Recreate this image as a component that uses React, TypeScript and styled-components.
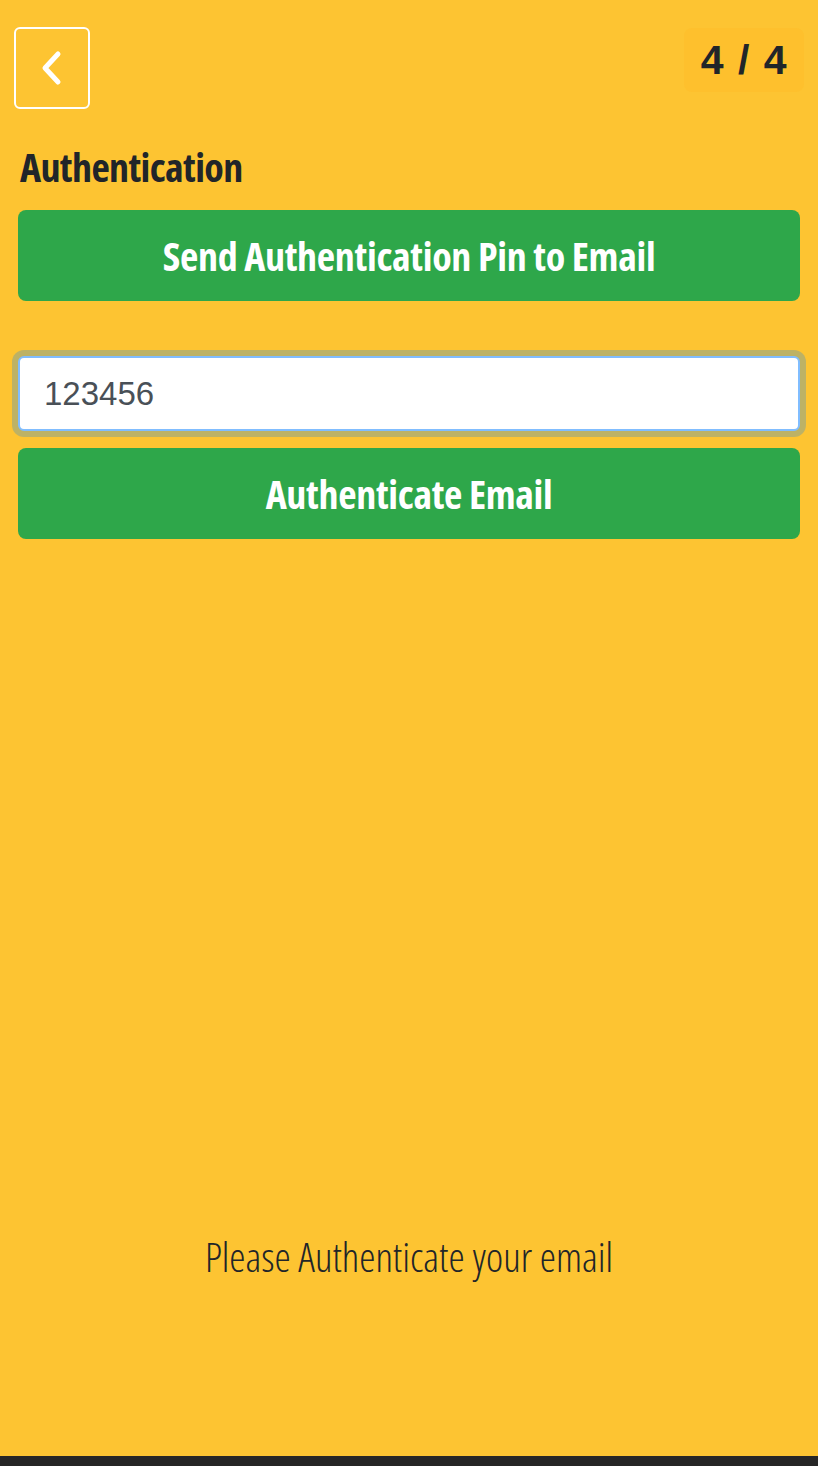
import React from 'react';
import styled, { createGlobalStyle } from 'styled-components';

const GlobalStyle = createGlobalStyle`
  html, body {
    margin: 0;
    padding: 0;
    background: #fdc432;
  }
  * {
    box-sizing: border-box;
  }
`;

const Page = styled.div`
  display: flex;
  flex-direction: column;
  height: 1466px;
  background: #fdc432;
  font-family: 'Open Sans', 'DejaVu Sans', sans-serif;
  font-stretch: 75%;
  color: #212529;
`;

const Content = styled.main`
  flex: 1;
  display: flex;
  flex-direction: column;
  padding: 27px 18px 0 18px;
`;

const TopBar = styled.div`
  display: flex;
  justify-content: space-between;
  align-items: flex-start;
`;

const BackButton = styled.button`
  width: 76px;
  height: 82px;
  margin-left: -4px;
  border: 2px solid #ffffff;
  border-radius: 6px;
  background: transparent;
  display: flex;
  align-items: center;
  justify-content: center;
  padding: 0;
  cursor: pointer;
`;

const StepBadge = styled.div`
  margin-top: 1px;
  margin-right: -4px;
  padding: 0 16px 0 17px;
  height: 64px;
  display: flex;
  align-items: center;
  border-radius: 8px;
  background: #fec02d;
  font-family: 'Liberation Sans', Arial, sans-serif;
  font-stretch: normal;
  font-weight: 700;
  font-size: 41px;
  letter-spacing: 1.5px;
  color: #212529;
`;

const Heading = styled.h2`
  margin: 34px 0 0 2px;
  font-size: 40px;
  font-weight: 700;
  letter-spacing: -0.6px;
  line-height: 1.2;
`;

const ActionButton = styled.button<{ $top: number }>`
  margin-top: ${(p) => p.$top}px;
  width: 100%;
  height: 91px;
  border: none;
  border-radius: 8px;
  background: #2ea74a;
  color: #ffffff;
  font-family: 'Open Sans', 'DejaVu Sans', sans-serif;
  font-stretch: 75%;
  font-weight: 700;
  font-size: 40px;
  letter-spacing: -0.3px;
  cursor: pointer;
`;

const PinInput = styled.input`
  margin-top: 55px;
  width: 100%;
  height: 75px;
  padding: 0 24px;
  border: 2px solid #80bdff;
  border-radius: 6px;
  background: #ffffff;
  box-shadow: 0 0 0 6px rgba(0, 123, 255, 0.25);
  outline: none;
  font-family: 'Liberation Sans', Arial, sans-serif;
  font-size: 33px;
  color: #495057;
`;

const Message = styled.p`
  margin: 0 0 175px 0;
  text-align: center;
  font-size: 41px;
  font-weight: 300;
  line-height: 1.2;
  color: #212529;
`;

const BottomBar = styled.div`
  height: 10px;
  background: #262626;
`;

const ChevronLeft = () => (
  <svg width="26" height="36" viewBox="0 0 26 36" fill="none">
    <path
      d="M19 4 L6 18 L19 32"
      stroke="#ffffff"
      strokeWidth="5"
      strokeLinecap="round"
      strokeLinejoin="round"
    />
  </svg>
);

export default function App() {
  return (
    <Page>
      <GlobalStyle />
      <Content>
        <TopBar>
          <BackButton aria-label="Back">
            <ChevronLeft />
          </BackButton>
          <StepBadge>4 / 4</StepBadge>
        </TopBar>
        <Heading>Authentication</Heading>
        <ActionButton $top={19}>Send Authentication Pin to Email</ActionButton>
        <PinInput defaultValue="123456" />
        <ActionButton $top={17}>Authenticate Email</ActionButton>
      </Content>
      <Message>Please Authenticate your email</Message>
      <BottomBar />
    </Page>
  );
}
